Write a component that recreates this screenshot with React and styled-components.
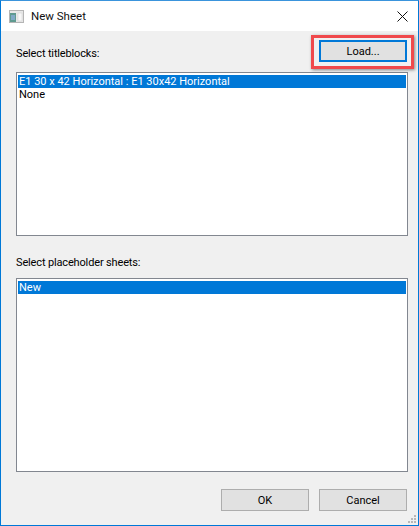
import styled, { createGlobalStyle } from 'styled-components'

const GlobalStyle = createGlobalStyle`
  html, body {
    margin: 0;
    padding: 0;
    background: #fff;
  }
  * {
    box-sizing: border-box;
  }
`

const Window = styled.div`
  position: relative;
  width: 419px;
  height: 526px;
  display: flex;
  flex-direction: column;
  border: 1px solid #0078d7;
  border-top-color: #3a94dc;
  background: #f0f0f0;
  font-family: Roboto, "Noto Sans", sans-serif;
  font-size: 11px;
  color: #000;
`

const TitleBar = styled.div`
  height: 30px;
  flex: none;
  display: flex;
  align-items: center;
  background: #fff;
  padding: 0 10px 0 8px;
  gap: 7px;
`

const Title = styled.div`
  flex: 1;
  font-size: 11.5px;
  color: #111;
`

const Body = styled.div`
  flex: 1;
  min-height: 0;
  display: flex;
  flex-direction: column;
  padding: 9px 10px 0 15px;
`

const TopRow = styled.div`
  display: flex;
  align-items: flex-end;
  justify-content: space-between;
  padding-right: 1px;
`

const Label = styled.div`
  line-height: 16px;
  letter-spacing: -0.15px;
`

const List = styled.div`
  height: ${(p) => p.$height}px;
  margin-top: ${(p) => p.$top || 0}px;
  flex: none;
  background: #fff;
  border: 1px solid #828790;
  padding: 2px 1px;
  line-height: 13px;
`

const Item = styled.div`
  height: 13px;
  padding-left: 1px;
  white-space: nowrap;
  background: ${(p) => (p.$selected ? '#0078d7' : 'transparent')};
  color: ${(p) => (p.$selected ? '#fff' : '#000')};
`

const Button = styled.div`
  width: 88px;
  height: 22px;
  display: flex;
  align-items: center;
  justify-content: center;
  background: #e1e1e1;
  border: ${(p) => (p.$focused ? '2px solid #0078d7' : '1px solid #adadad')};
`

const LabelRow = styled.div`
  margin-top: 19px;
  height: 23px;
`

const Footer = styled.div`
  margin-top: 17px;
  display: flex;
  justify-content: flex-end;
  gap: 10px;
  padding-right: 1px;
`

const Highlight = styled.div`
  position: absolute;
  left: 310px;
  top: 34px;
  width: 103px;
  height: 34px;
  border: 3px solid #f0494c;
  box-shadow: 1px 1px 3px rgba(0, 0, 0, 0.45);
  pointer-events: none;
`

const Grip = styled.svg`
  position: absolute;
  right: 1px;
  bottom: 1px;
`

const AppIcon = () => (
  <svg width="15" height="15" viewBox="0 0 15 15">
    <rect x="0.5" y="1.5" width="14" height="12" fill="#e8e8e8" stroke="#b5b5b5" />
    <rect x="1" y="4" width="6" height="9" fill="#5f9a90" />
    <rect x="2" y="6" width="4" height="5" fill="#7fa9c6" />
    <rect x="9" y="4" width="4" height="8" fill="#f7f7f7" stroke="#cfcfcf" strokeWidth="0.5" />
  </svg>
)

const CloseIcon = () => (
  <svg width="11" height="11" viewBox="0 0 11 11" fill="none" stroke="#111" strokeWidth="1">
    <path d="M0.5 0.5 L10.5 10.5 M10.5 0.5 L0.5 10.5" />
  </svg>
)

const GripIcon = () => (
  <Grip width="10" height="10" viewBox="0 0 10 10" fill="#b8b8b8">
    <rect x="7" y="1" width="2" height="2" />
    <rect x="4" y="4" width="2" height="2" />
    <rect x="7" y="4" width="2" height="2" />
    <rect x="1" y="7" width="2" height="2" />
    <rect x="4" y="7" width="2" height="2" />
    <rect x="7" y="7" width="2" height="2" />
  </Grip>
)

const App = () => {
  return (
    <Window>
      <GlobalStyle />
      <TitleBar>
        <AppIcon />
        <Title>New Sheet</Title>
        <CloseIcon />
      </TitleBar>
      <Body>
        <TopRow>
          <Label>Select titleblocks:</Label>
          <Button $focused>Load...</Button>
        </TopRow>
        <List $height={164} $top={10}>
          <Item $selected>E1 30 x 42 Horizontal : E1 30x42 Horizontal</Item>
          <Item>None</Item>
        </List>
        <LabelRow>
          <Label>Select placeholder sheets:</Label>
        </LabelRow>
        <List $height={194}>
          <Item $selected>New</Item>
        </List>
        <Footer>
          <Button>OK</Button>
          <Button>Cancel</Button>
        </Footer>
      </Body>
      <Highlight />
      <GripIcon />
    </Window>
  )
}

export default App
